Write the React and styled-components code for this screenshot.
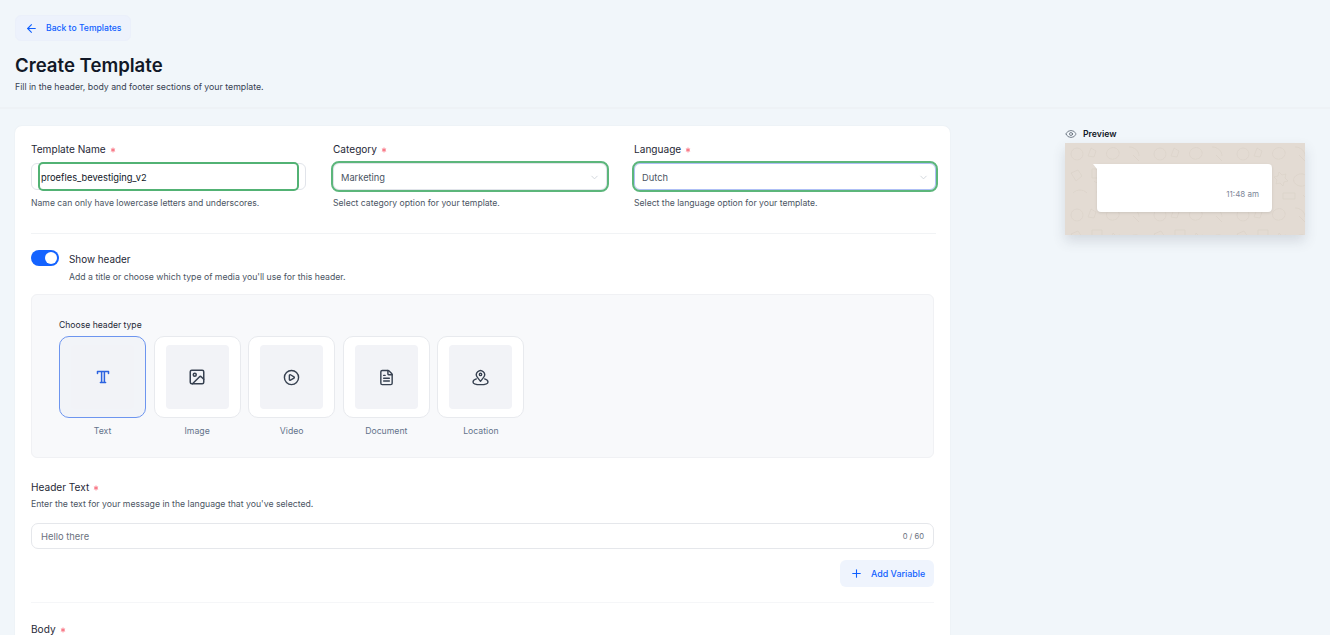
import React from 'react';
import styled, { createGlobalStyle } from 'styled-components';
import { ArrowLeft, Asterisk, ChevronDown, CirclePlay, Eye, FileText, Image as ImageIcon, Plus } from 'lucide-react';

const Global = createGlobalStyle`
  html, body { margin: 0; height: 635px; overflow: hidden; background: #f1f6fa; }
  body { font-family: Inter, "Noto Sans", "Liberation Sans", sans-serif; color: #111827; }
  * { box-sizing: border-box; }
`;
const Page = styled.div`height: 635px; overflow: hidden; padding-top: 15px;`;
const Head = styled.header`padding: 0 15px 14px; border-bottom: 2px solid #eef2f6;`;
const BackButton = styled.button`
  display: flex; align-items: center; gap: 8px; width: 116px; height: 26px; padding: 0 0 0 9px;
  border: 1px solid #ebf0fa; border-radius: 6px; background: #edf2fc; color: #0f5fff;
  font: 500 8.6px Inter, sans-serif; margin-bottom: 12px;
`;
const Title = styled.h1`margin: 0; font-size: 18.6px; line-height: 24px; font-weight: 600; color: #111827;`;
const Sub = styled.p`margin: 4px 0 0; font-size: 8.75px; line-height: 12px; color: #374151;`;
const Content = styled.div`display: flex; padding: 17px 0 0 15px; gap: 115px;`;
const Card = styled.main`
  flex: none; width: 935px; height: 600px; padding: 16px 16px 0; background: #fff; border-radius: 7px;
  box-shadow: 0 0 2px rgba(31, 41, 55, .06);
`;
const FieldRow = styled.div`display: grid; grid-template-columns: 275px 274px 302px; column-gap: 27px; width: 905px; padding-bottom: 24px; border-bottom: 1px solid #f1f3f5;`;
const Field = styled.div`min-width: 0;`;
const Label = styled.label`display: flex; align-items: center; gap: 3px; height: 14px; font-size: 10.1px; color: #1f2937;`;
const Req = styled(Asterisk)`color: #f87180; margin-top: 2px;`;
const Control = styled.div`
  position: relative; height: 27px; margin-top: 7px; display: flex; align-items: center; justify-content: space-between;
  padding: 1px 6px 0 7px; border-radius: 6px; font-size: 9.3px; background: #fff; color: #4b5563;
  border: 1px solid ${p => p.$focus ? '#aebff5' : '#e1e4ea'};
  outline: ${p => p.$outlined ? '2px solid #5cb67b' : 'none'};
`;
const FocusBox = styled.div`
  position: absolute; left: 6px; right: 6px; top: -2px; bottom: -2px; display: flex; align-items: center; padding: 1px 0 0 1px;
  background: #fff; border: 2px solid #52b274; border-radius: 5px; color: #111827;
`;
const Hint = styled.p`margin: 7px 0 0; font-size: 8.65px; line-height: 12px; color: #4b5563;`;
const ToggleRow = styled.div`display: flex; gap: 10px; padding-top: 16px;`;
const Track = styled.span`display: flex; justify-content: flex-end; align-items: center; flex: none; width: 28px; height: 16px; padding: 2px; border-radius: 8px; background: #1463ff;`;
const Knob = styled.span`width: 12px; height: 12px; border-radius: 50%; background: #fff;`;
const ToggleText = styled.div`padding-top: 1px;`;
const ToggleTitle = styled.div`font-size: 9.9px; line-height: 16px; color: #1f2937;`;
const ToggleSub = styled.div`margin-top: 4px; font-size: 8.7px; line-height: 12px; color: #4b5563;`;
const Panel = styled.section`width: 903px; height: 164px; margin-top: 11px; padding: 24px 27px; background: #f8f9fb; border: 1px solid #f0f1f4; border-radius: 6px;`;
const PanelTitle = styled.div`font-size: 8.6px; line-height: 12px; color: #1f2937;`;
const Tiles = styled.div`display: flex; gap: 7.6px; margin-top: 5px;`;
const TileWrap = styled.div`width: 87px; text-align: center; font-size: 8.7px; line-height: 12px; color: #64748b;`;
const Tile = styled.div`
  height: 82px; padding: 8px 11px; margin-bottom: 7px; border-radius: 10px;
  background: ${p => p.$active ? '#f2f4f8' : '#fff'};
  border: 1px solid ${p => p.$active ? '#6d95ef' : '#e8eaee'};
`;
const TileInner = styled.div`
  height: 64px; display: flex; align-items: center; justify-content: center; border-radius: 4px;
  background: #f2f3f7; color: ${p => p.$active ? '#2c63e0' : '#374151'};
`;
const Section = styled.section`padding-top: 22px;`;
const SectionHint = styled.p`margin: 4px 0 0; font-size: 8.7px; line-height: 12px; color: #4b5563;`;
const TextInput = styled.div`
  height: 26px; margin-top: 13px; padding: 0 9px; width: 903px; display: flex; align-items: center; justify-content: space-between;
  border: 1px solid #e5e7eb; border-radius: 7px; font-size: 9.4px; color: #6b7280;
`;
const Counter = styled.span`font-size: 7.6px;`;
const ActionRow = styled.div`display: flex; justify-content: flex-end; width: 903px; margin-top: 11px; padding-bottom: 15px; border-bottom: 1px solid #f5f6f8;`;
const AddButton = styled.button`
  display: flex; align-items: center; gap: 8px; width: 94px; height: 27px; padding: 0 0 0 10px; border: 0; border-radius: 6px;
  background: #eff4fd; color: #0f5fff; font: 500 8.9px Inter, sans-serif;
`;
const BodyLabel = styled(Label)`margin-top: 19px;`;
const Side = styled.aside`flex: none; width: 240px;`;
const PreviewLabel = styled.div`display: flex; align-items: center; gap: 6px; height: 16px; font-size: 8.7px; font-weight: 600; color: #111827;`;
const EyeIcon = styled(Eye)`color: #4b5563;`;
const Wall = styled.div`
  position: relative; height: 92px; margin-top: 1px; padding: 21px 33px 0 32px; background: #e3dbd3;
  box-shadow: 0 6px 12px rgba(60, 70, 90, .16); overflow: hidden;
`;
const Doodles = styled.svg`position: absolute; inset: 0; width: 100%; height: 100%; color: #d9d0c6;`;
const Bubble = styled.div`
  position: relative; display: flex; align-items: flex-end; justify-content: flex-end; height: 48px; padding: 0 13px 12px; background: #fff;
  border-radius: 0 4px 4px 4px / 4px; box-shadow: 0 1px 3px rgba(0,0,0,.1); font-size: 8px; line-height: 12px; color: #7c8698;
  &::before { content: ''; position: absolute; left: -4px; top: 0; border-top: 5px solid #fff; border-left: 4px solid transparent; }
`;

const TypeGlyph = () => (
  <svg width="14" height="14" viewBox="0 0 14 14" fill="none" stroke="currentColor" strokeWidth="1.5" strokeLinecap="round" strokeLinejoin="round">
    <path d="M1.5 3.4V1.6h11v1.8M5.6 1.6v10.8M8.4 1.6v10.8M4.4 12.4h5.2" />
  </svg>
);
const LocationGlyph = () => (
  <svg width="19" height="19" viewBox="0 0 16 16" fill="none" stroke="currentColor" strokeWidth="1.15" strokeLinecap="round" strokeLinejoin="round">
    <path d="M8 11.2 5.4 7.9a3.4 3.4 0 1 1 5.2 0L8 11.2Z" />
    <circle cx="8" cy="5.4" r="1" />
    <path d="M4.5 9.2C2.9 9.8 1.7 10.6 1.7 11.7c0 1.4 3 2.3 6.3 2.3s6.3-.9 6.3-2.3c0-1.1-1.2-1.9-2.8-2.5" />
  </svg>
);
const Req8 = () => <Req size={8} strokeWidth={3} />;

const tiles = [
  { name: 'Text', icon: <TypeGlyph />, active: true },
  { name: 'Image', icon: <ImageIcon size={18} strokeWidth={2} /> },
  { name: 'Video', icon: <CirclePlay size={17} strokeWidth={2} /> },
  { name: 'Document', icon: <FileText size={17} strokeWidth={2} /> },
  { name: 'Location', icon: <LocationGlyph /> },
];

const WallPattern = () => (
  <Doodles aria-hidden="true">
    <defs>
      <pattern id="doodle" width="83" height="61" patternUnits="userSpaceOnUse">
        <g fill="none" stroke="currentColor" strokeWidth=".6">
          <circle cx="12" cy="11" r="6" />
          <path d="M26 5l5 3-2 6-6-1zM44 6c4-3 9-1 10 3s-3 8-8 7-6-7-2-10zM64 4c6 0 10 4 10 9M68 12l6 6M6 30l7-3 4 6-6 5zM27 26h10v9H27zM29 38c3 3 8 3 11 0M48 29l3 3 4-1-1 4 3 3-4 1-1 4-3-3-4 1 1-4-3-3 4-1zM66 32c5-3 11 0 11 5s-6 8-11 5-4-8 0-10zM8 50c4-4 10-4 14 0M32 48l8 6-6 4zM52 50h12v6H52zM72 52l5 5" />
        </g>
      </pattern>
    </defs>
    <rect width="100%" height="100%" fill="url(#doodle)" />
  </Doodles>
);

export default function App() {
  return (
    <Page>
      <Global />
      <Head>
        <BackButton><ArrowLeft size={13} />Back to Templates</BackButton>
        <Title>Create Template</Title>
        <Sub>Fill in the header, body and footer sections of your template.</Sub>
      </Head>
      <Content>
        <Card>
          <FieldRow>
            <Field>
              <Label>Template Name <Req8 /></Label>
              <Control><FocusBox>proefles_bevestiging_v2</FocusBox></Control>
              <Hint>Name can only have lowercase letters and underscores.</Hint>
            </Field>
            <Field>
              <Label>Category <Req8 /></Label>
              <Control $outlined>Marketing<ChevronDown size={11} color="#cfd4da" /></Control>
              <Hint>Select category option for your template.</Hint>
            </Field>
            <Field>
              <Label>Language <Req8 /></Label>
              <Control $outlined $focus>Dutch<ChevronDown size={11} color="#cfd4da" /></Control>
              <Hint>Select the language option for your template.</Hint>
            </Field>
          </FieldRow>
          <ToggleRow>
            <Track><Knob /></Track>
            <ToggleText>
              <ToggleTitle>Show header</ToggleTitle>
              <ToggleSub>Add a title or choose which type of media you'll use for this header.</ToggleSub>
            </ToggleText>
          </ToggleRow>
          <Panel>
            <PanelTitle>Choose header type</PanelTitle>
            <Tiles>
              {tiles.map(t => (
                <TileWrap key={t.name}>
                  <Tile $active={t.active}><TileInner $active={t.active}>{t.icon}</TileInner></Tile>
                  {t.name}
                </TileWrap>
              ))}
            </Tiles>
          </Panel>
          <Section>
            <Label>Header Text <Req8 /></Label>
            <SectionHint>Enter the text for your message in the language that you've selected.</SectionHint>
            <TextInput><span>Hello there</span><Counter>0 / 60</Counter></TextInput>
            <ActionRow><AddButton><Plus size={13} />Add Variable</AddButton></ActionRow>
            <BodyLabel>Body <Req8 /></BodyLabel>
          </Section>
        </Card>
        <Side>
          <PreviewLabel><EyeIcon size={12} strokeWidth={1.4} />Preview</PreviewLabel>
          <Wall>
            <WallPattern />
            <Bubble>11:48 am</Bubble>
          </Wall>
        </Side>
      </Content>
    </Page>
  );
}
